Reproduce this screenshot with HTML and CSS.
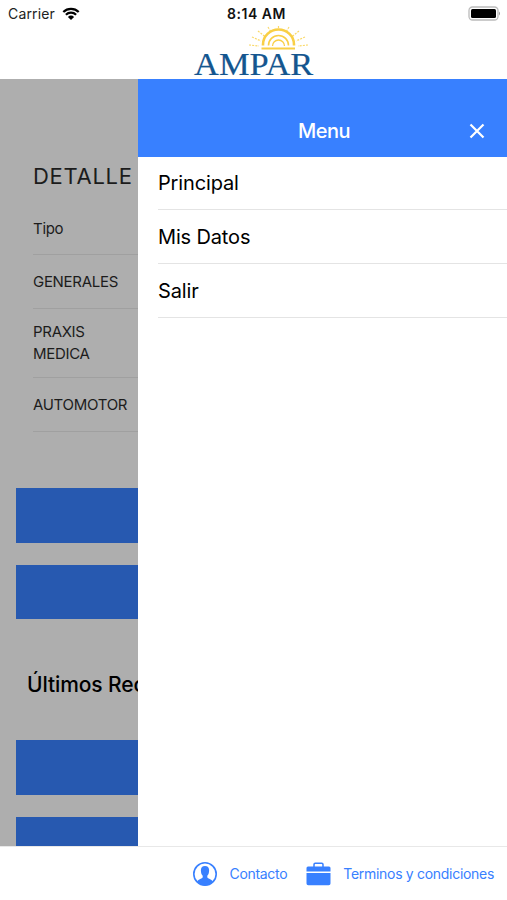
FILE: index.html
```html
<!DOCTYPE html>
<html lang="es">

<head>
    <meta charset="UTF-8">
    <meta name="viewport" content="width=device-width, initial-scale=1.0">
    <title>AMPAR</title>
    <link rel="stylesheet" href="styles.css">
</head>

<body>
    <header class="header">
        <div class="status-bar">
            <div class="carrier">
                <span class="carrier-name">Carrier</span>
                <svg class="wifi" viewBox="0 0 18 13" width="18" height="13">
                    <path d="M1.3 5A11 11 0 0 1 16.7 5M3.9 7.8A7.2 7.2 0 0 1 14.1 7.8" fill="none" stroke="#000" stroke-width="2.2"/>
                    <path d="M9 13L5.9 9.9A4.4 4.4 0 0 1 12.1 9.9Z"/>
                </svg>
            </div>
            <span class="clock">8:14 AM</span>
            <svg class="battery" viewBox="0 0 33 15" width="33" height="15">
                <rect x="1" y="1" width="29" height="13" rx="3.5" fill="#fff" stroke="#bbb" stroke-width="1.3"/>
                <rect x="3" y="3" width="25" height="9" rx="1.5"/>
                <path d="M31 5.5Q33 7.5 31 9.5Z" fill="#999"/>
            </svg>
        </div>
        <div class="logo">
            <svg class="sun" viewBox="0 0 60 25" width="60" height="25">
                <g fill="none" stroke="#f9cf45">
                    <path d="M15 19.5V18.5A15.5 15 0 0 1 46 18.5V19.5" stroke-width="2.6"/>
                    <path d="M20.5 19.5A10 10 0 0 1 40.5 19.5" stroke-width="1.6"/>
                    <path d="M24.5 20A6 6 0 0 1 36.5 20" stroke-width="1.3"/>
                    <path d="M13.5 22.5H47" stroke-width="2"/>
                    <path d="M1 19L11 20M4 11L13 15M10 5L17 10.5M20 1L23 6M30.5 0V3M41 1L38 6M51 5L44 10.5M57 11L48 15M60 19L50 20" stroke-width="1.2" stroke-dasharray="2 1.2" opacity="0.8"/>
                </g>
            </svg>
            <span class="logo-name">AMPAR</span>
        </div>
    </header>

    <main class="main">
        <section class="page">
            <div class="detail">
                <h2>DETALLE</h2>
                <div class="row head">Tipo</div>
                <div class="row">GENERALES</div>
                <div class="row tall">PRAXIS<br>MEDICA</div>
                <div class="row">AUTOMOTOR</div>
            </div>
            <div class="buttons">
                <div class="button"></div>
                <div class="button"></div>
            </div>
            <h3>Últimos Rec</h3>
            <div class="buttons">
                <div class="button"></div>
                <div class="button"></div>
            </div>
        </section>

        <nav class="menu">
            <div class="menu-header">
                <span class="menu-title">Menu</span>
                <svg class="close" viewBox="0 0 16 16" width="16" height="16">
                    <path d="M1.5 1.5L14.5 14.5M14.5 1.5L1.5 14.5" stroke="#fff" stroke-width="2.2"/>
                </svg>
            </div>
            <ul class="menu-list">
                <li class="principal">Principal</li>
                <li>Mis Datos</li>
                <li>Salir</li>
            </ul>
        </nav>
    </main>

    <footer class="footer">
        <svg class="contact-icon" viewBox="0 0 24 24" width="24" height="24">
            <circle cx="12" cy="12" r="11.2" fill="none" stroke="#3880ff" stroke-width="1.6"/>
            <path d="M12 4C9.2 4 7.7 5.8 7.9 8.7C8 11 8.5 12.6 9.7 13.7V15.3C9.4 16.8 5.5 16.8 4 19.8C8 24.8 16 24.8 20 19.8C18.5 16.8 14.6 16.8 14.3 15.3V13.7C15.5 12.6 16 11 16.1 8.7C16.3 5.8 14.8 4 12 4Z" fill="#3880ff"/>
        </svg>
        <span class="contact">Contacto</span>
        <svg class="terms-icon" viewBox="0 0 25 24" width="25" height="24">
            <path d="M8 5V2.5Q8 1.3 9.2 1.3H15.8Q17 1.3 17 2.5V5" fill="none" stroke="#3880ff" stroke-width="1.5"/>
            <path d="M2 4.5H23Q24.5 4.5 24.5 6V9.5H.5V6Q.5 4.5 2 4.5ZM.5 11H24.5V21.5Q24.5 23.3 22.7 23.3H2.3Q.5 23.3 .5 21.5Z" fill="#3880ff"/>
        </svg>
        <span class="terms">Terminos y condiciones</span>
    </footer>
</body>

</html>
```

FILE: styles.css
```css
* {
    box-sizing: border-box;
}

body {
    display: flex;
    flex-direction: column;
    height: 900px;
    margin: 0;
    overflow: hidden;
    background-color: #fff;
    color: #000;
    font-family: Inter, "Liberation Sans", sans-serif;
}

svg {
    display: block;
    flex: none;
}

.header {
    height: 79px;
    flex: none;
}

.status-bar {
    display: grid;
    grid-template-columns: 1fr auto 1fr;
    align-items: center;
    height: 26px;
    padding: 1px 6px 0 12px;
}

.carrier {
    display: flex;
    align-items: center;
    gap: 7px;
    margin-left: -4px;
    font-size: 14px;
    letter-spacing: 0.15px;
    color: #222;
}

.clock {
    font-size: 14px;
    font-weight: 600;
    letter-spacing: 0.5px;
    color: #111;
}

.battery {
    justify-self: end;
}

.logo {
    display: flex;
    flex-direction: column;
    align-items: center;
}

.sun {
    margin-left: 48px;
}

.logo-name {
    margin-top: -1px;
    font-family: "Liberation Serif", serif;
    font-size: 31px;
    line-height: 29px;
    color: #14568f;
    -webkit-text-stroke: 0.2px #14568f;
    transform: scaleX(1.11);
}

.main {
    display: flex;
    height: 767px;
    flex: none;
}

.page {
    width: 138px;
    flex: none;
    overflow: hidden;
    background-color: #aeaeae;
    white-space: nowrap;
}

.detail {
    margin-left: 33px;
    padding-top: 81px;
}

h2 {
    margin: 0;
    height: 41px;
    font-size: 22px;
    font-weight: 400;
    line-height: 32px;
    letter-spacing: 0.7px;
    color: #1c1c1c;
}

.row {
    display: flex;
    align-items: center;
    height: 54px;
    border-bottom: 1px solid #a0a0a0;
    font-size: 15px;
    line-height: 22px;
    letter-spacing: -0.3px;
    color: #1c1c1c;
}

.row.head {
    padding-top: 2px;
}

.row.tall {
    height: 69px;
}

.buttons {
    display: flex;
    flex-direction: column;
    gap: 22px;
    margin-left: 15.5px;
    padding-top: 56px;
}

.button {
    height: 54.5px;
    background-color: #2759b0;
}

h3 {
    margin: 50px 0 0 27px;
    height: 32px;
    font-size: 21px;
    font-weight: 500;
    line-height: 32px;
    letter-spacing: -0.1px;
}

h3 + .buttons {
    padding-top: 39px;
}

.menu {
    flex: 1;
    background-color: #fff;
}

.menu-header {
    display: grid;
    grid-template-columns: 1fr auto 1fr;
    align-items: center;
    height: 78px;
    padding: 26px 22px 0 25px;
    background-color: #3880ff;
    color: #fff;
}

.menu-title {
    grid-column: 2;
    font-size: 20px;
    font-weight: 500;
    letter-spacing: -0.5px;
}

.close {
    justify-self: end;
}

.menu-list {
    margin: 0 0 0 20px;
    padding: 0;
    list-style: none;
}

.menu-list li {
    height: 54px;
    border-bottom: 1px solid #e4e4e4;
    font-size: 20px;
    line-height: 54px;
    letter-spacing: -0.15px;
}

.menu-list .principal {
    height: 53px;
    line-height: 53px;
}

.footer {
    display: flex;
    align-items: center;
    justify-content: flex-end;
    height: 54px;
    padding-right: 13px;
    border-top: 1px solid #e8e8e8;
    font-size: 14px;
    letter-spacing: -0.3px;
    color: #3880ff;
}

.contact {
    margin: 0 19px 0 12px;
}

.terms {
    margin-left: 12px;
}
```
